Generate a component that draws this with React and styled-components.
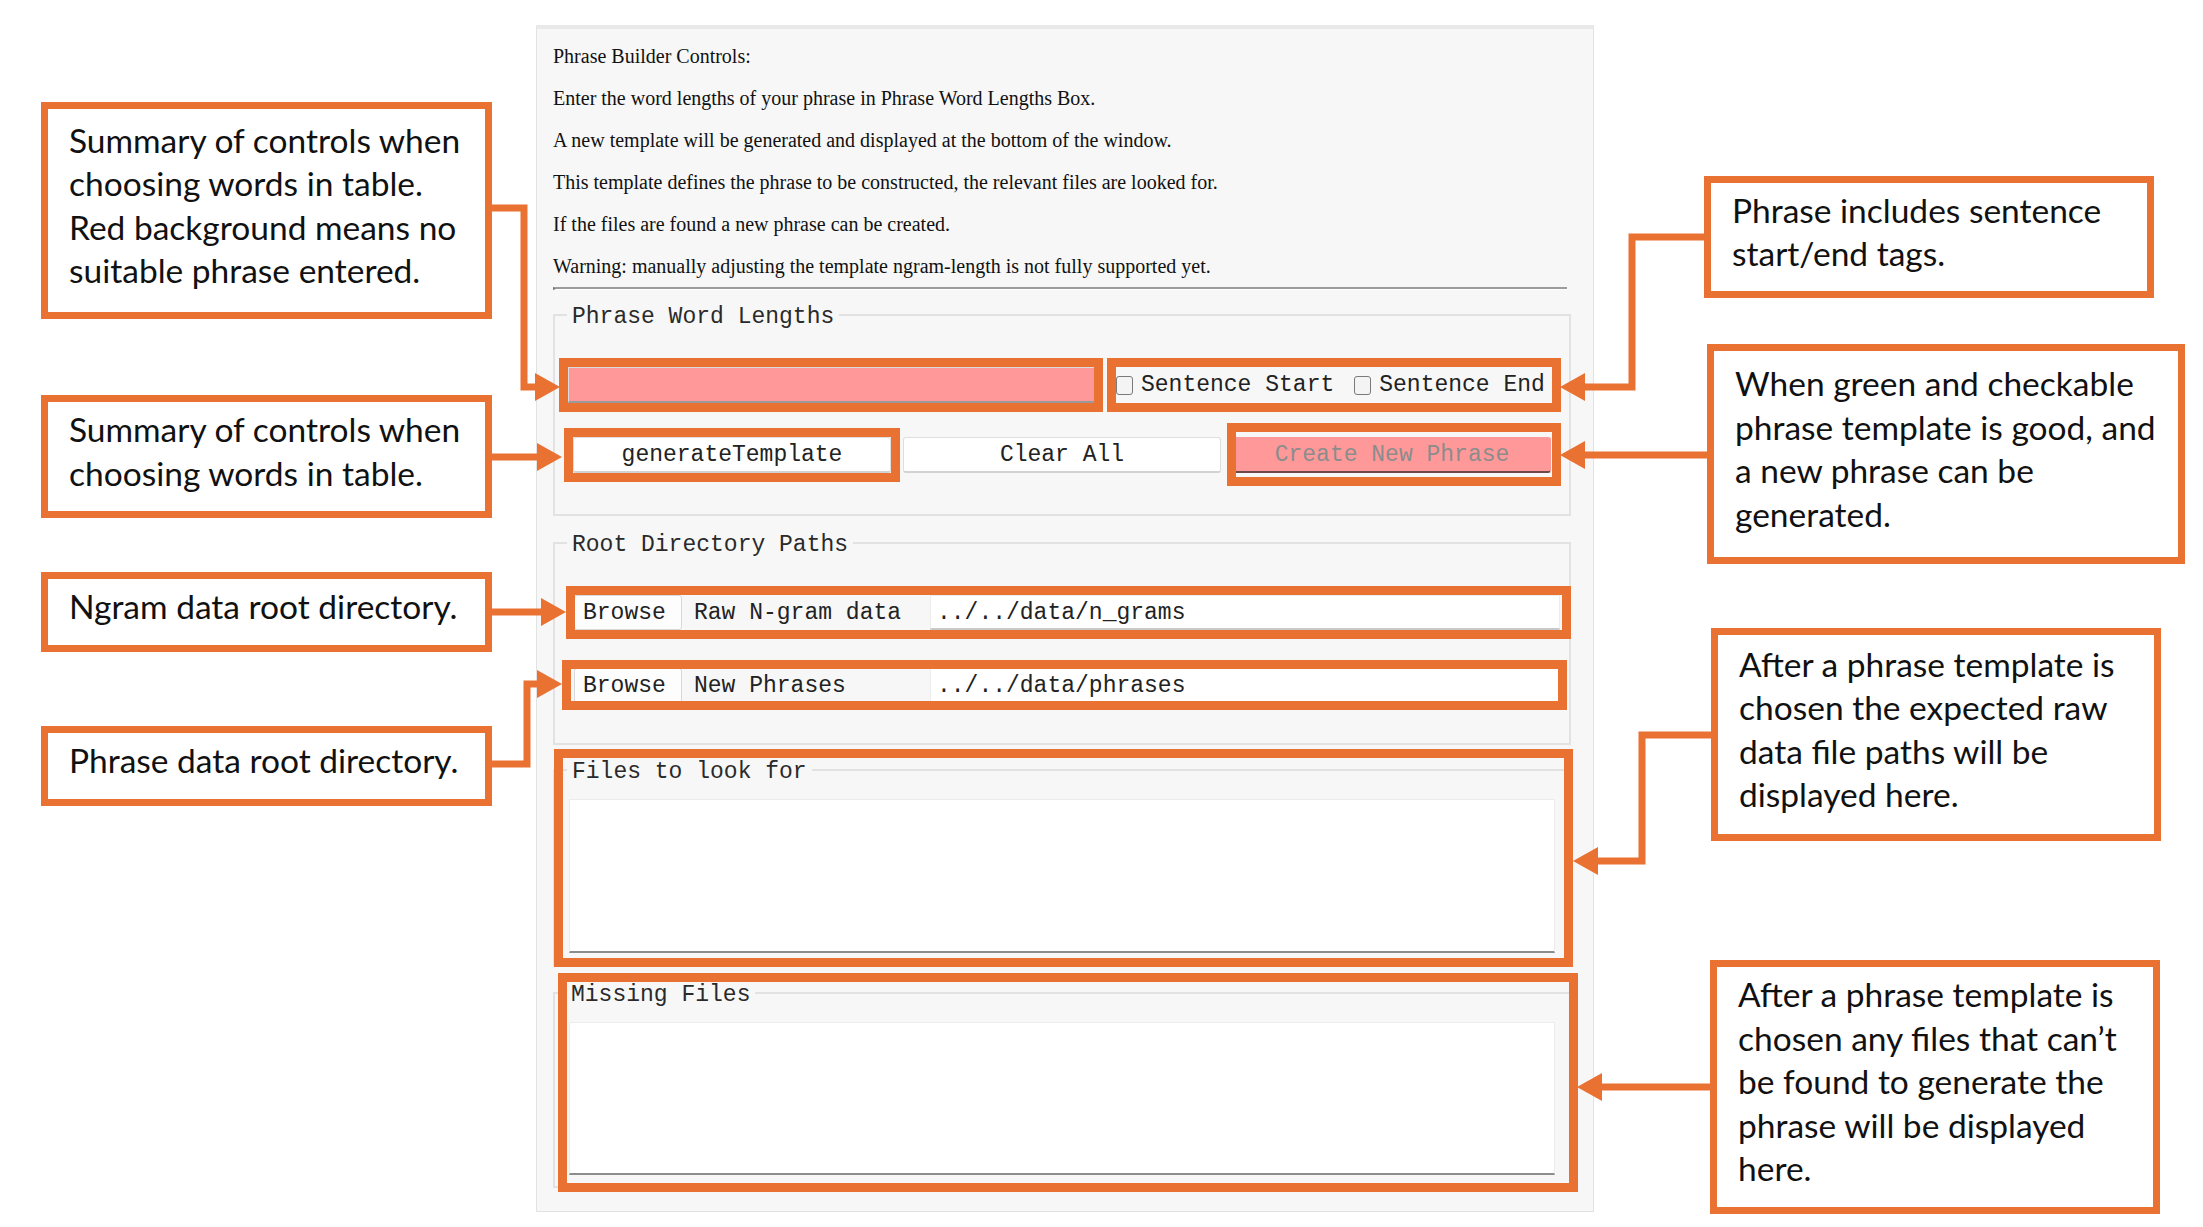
import React from 'react';
import styled, { createGlobalStyle } from 'styled-components';

const ORANGE = '#E97132';
const MONO = '"Liberation Mono", "Courier New", monospace';
const SERIF = '"Liberation Serif", "Times New Roman", serif';
const SANS = 'Lato, "Open Sans", sans-serif';

const GlobalStyle = createGlobalStyle`
  html, body { margin: 0; padding: 0; background: #fff; }
  * { box-sizing: border-box; }
`;

const Canvas = styled.div`
  position: relative;
  width: 2203px;
  height: 1227px;
  overflow: hidden;
  background: #fff;
  padding: 25px 0 0 536px;
`;

const Panel = styled.div`
  width: 1058px;
  background: #f7f7f7;
  border: 1px solid #e2e2e2;
  border-top: 4px solid #e9e9e9;
  padding: 6px 22px 23px 16px;
`;

const Intro = styled.p`
  margin: 0;
  font-family: ${SERIF};
  font-size: 20px;
  line-height: 42px;
  color: #111;
  white-space: nowrap;
`;

const Rule = styled.div`
  height: 3px;
  margin-right: 4px;
  border-top: 2px solid #9c9c9c;
  border-left: 3px solid #777;
  border-bottom: 1px solid #fff;
`;

const Group = styled.div`
  position: relative;
  margin-top: ${p => p.$gap}px;
  border: 2px solid #e2e2e2;
  padding: 0 ${p => p.$pr}px ${p => p.$pb}px ${p => p.$pl}px;
`;

const Legend = styled.div`
  width: fit-content;
  margin: -12px 0 0 ${p => p.$ml}px;
  padding: 0 5px;
  background: #f7f7f7;
  font-family: ${MONO};
  font-size: 23px;
  line-height: 26px;
  color: #2a2a2a;
  white-space: pre;
`;

/* orange highlight frame drawn over a control */
const Marked = styled.div`
  position: relative;
  flex: none;
  &::after {
    content: '';
    position: absolute;
    top: ${p => p.$t ?? -9}px;
    right: ${p => p.$r ?? -9}px;
    bottom: ${p => p.$b ?? -9}px;
    left: ${p => p.$l ?? -9}px;
    border: 9px solid ${ORANGE};
    pointer-events: none;
    z-index: 2;
  }
`;

const InputRow = styled.div`
  display: flex;
  align-items: center;
  gap: 21px;
  margin-top: 37px;
`;

const PhraseInput = styled.input`
  display: block;
  width: 527px;
  height: 36px;
  margin: 0;
  background: #ff9999;
  border: 1px solid #dcdcdc;
  border-bottom: 2px solid #9a9a9a;
  box-shadow: 0 0 0 1px #fff;
  outline: none;
`;

const Checks = styled.div`
  display: flex;
  align-items: center;
  width: 436px;
  height: 36px;
  font-family: ${MONO};
  font-size: 23px;
  color: #222;
  white-space: pre;
`;

const Check = styled.input.attrs({ type: 'checkbox' })`
  appearance: none;
  flex: none;
  width: 17px;
  height: 19px;
  margin: 0 8px 0 ${p => p.$gap || 0}px;
  border: 1px solid #7a7a7a;
  border-radius: 3px;
  background: #f4f4f4;
`;

const ButtonRow = styled.div`
  display: grid;
  grid-template-columns: repeat(3, 318px);
  gap: 12px;
  margin: 34px 0 0 5px;
`;

const Button = styled.button`
  display: block;
  width: 100%;
  height: 36px;
  margin: 0;
  padding: 0;
  font-family: ${MONO};
  font-size: 23px;
  color: ${p => (p.$danger ? '#8c8c8c' : '#222')};
  background: ${p => (p.$danger ? '#ff9999' : '#fff')};
  border: 1px solid ${p => (p.$danger ? '#ff9999' : '#dedede')};
  border-bottom: 2px solid ${p => (p.$danger ? '#6e4848' : '#d2d2d2')};
  border-radius: 3px;
`;

const PathRow = styled.div`
  display: flex;
  align-items: stretch;
  width: 986px;
  height: 35px;
  margin-top: ${p => p.$gap}px;
  font-family: ${MONO};
  font-size: 23px;
  color: #222;
`;

const Browse = styled.button`
  flex: none;
  width: 108px;
  height: 100%;
  margin: 0;
  padding: 0 0 0 8px;
  text-align: left;
  font: inherit;
  color: inherit;
  background: #fdfdfd;
  border: 1px solid #d9d9d9;
  border-radius: 3px;
`;

const PathLabel = styled.span`
  flex: none;
  width: 248px;
  padding-left: 12px;
  line-height: 37px;
  white-space: pre;
`;

const PathInput = styled.input`
  flex: 1;
  min-width: 0;
  margin: 0;
  padding: 2px 6px 0;
  font: inherit;
  color: inherit;
  background: #fff;
  border: 1px solid #ececec;
  border-bottom: 2px solid #c9c9c9;
  outline: none;
`;

const TextBox = styled.div`
  height: ${p => p.$h}px;
  margin-top: 14px;
  margin-right: 1px;
  background: #fff;
  border: 1px solid #ececec;
  border-bottom: 2px solid #8c8c8c;
`;

const Callout = styled.div`
  position: absolute;
  left: ${p => p.$x}px;
  top: ${p => p.$y}px;
  width: ${p => p.$w}px;
  height: ${p => p.$h}px;
  display: flex;
  flex-direction: column;
  justify-content: center;
  padding: 0 6px 10px 21px;
  background: #fff;
  border: 7px solid ${ORANGE};
  font-family: ${SANS};
  font-size: 33.5px;
  line-height: 43.5px;
  color: #111;
  white-space: nowrap;
  z-index: 3;
`;

const Connectors = styled.svg`
  position: absolute;
  left: 0;
  top: 0;
  pointer-events: none;
  z-index: 4;
`;

const intro = [
  'Phrase Builder Controls:',
  'Enter the word lengths of your phrase in Phrase Word Lengths Box.',
  'A new template will be generated and displayed at the bottom of the window.',
  'This template defines the phrase to be constructed, the relevant files are looked for.',
  'If the files are found a new phrase can be created.',
  'Warning: manually adjusting the template ngram-length is not fully supported yet.',
];

const callouts = [
  { x: 41, y: 102, w: 451, h: 217, lines: ['Summary of controls when', 'choosing words in table.', 'Red background means no', 'suitable phrase entered.'] },
  { x: 41, y: 395, w: 451, h: 123, lines: ['Summary of controls when', 'choosing words in table.'] },
  { x: 41, y: 572, w: 451, h: 80, lines: ['Ngram data root directory.'] },
  { x: 41, y: 726, w: 451, h: 80, lines: ['Phrase data root directory.'] },
  { x: 1704, y: 176, w: 450, h: 122, lines: ['Phrase includes sentence', 'start/end tags.'] },
  { x: 1707, y: 344, w: 478, h: 220, lines: ['When green and checkable', 'phrase template is good, and', 'a new phrase can be', 'generated.'] },
  { x: 1711, y: 628, w: 450, h: 213, lines: ['After a phrase template is', 'chosen the expected raw', 'data file paths will be', 'displayed here.'] },
  { x: 1710, y: 960, w: 450, h: 254, lines: ['After a phrase template is', 'chosen any files that can\u2019t', 'be found to generate the', 'phrase will be displayed', 'here.'] },
];

// [path, arrow tip x, tip y, direction]
const links = [
  ['M492 208 H524 V387 H538', 560, 387, 1],
  ['M492 457 H538', 562, 457, 1],
  ['M492 612 H543', 566, 612, 1],
  ['M492 764 H527 V684 H540', 562, 684, 1],
  ['M1704 237 H1632 V387 H1582', 1560, 387, -1],
  ['M1707 455 H1582', 1560, 455, -1],
  ['M1711 735 H1642 V861 H1595', 1573, 861, -1],
  ['M1710 1087 H1599', 1577, 1087, -1],
];

const Arrow = ({ x, y, dir }) => {
  const base = x - dir * 25;
  return <polygon points={`${base},${y - 14} ${x},${y} ${base},${y + 14}`} fill={ORANGE} />;
};

export default function App() {
  return (
    <>
      <GlobalStyle />
      <Canvas>
        <Panel>
          {intro.map(t => (
            <Intro key={t}>{t}</Intro>
          ))}
          <Rule />

          <Group $gap={24} $pl={13} $pr={13} $pb={41}>
            <Legend $ml={-1}>Phrase Word Lengths</Legend>
            <InputRow>
              <Marked $r={-8}>
                <PhraseInput />
              </Marked>
              <Marked>
                <Checks>
                  <Check />
                  Sentence Start
                  <Check $gap={20} />
                  Sentence End
                </Checks>
              </Marked>
            </InputRow>
            <ButtonRow>
              <Marked>
                <Button>generateTemplate</Button>
              </Marked>
              <Button>Clear All</Button>
              <Marked $t={-14} $b={-13} $l={-6} $r={-10}>
                <Button $danger>Create New Phrase</Button>
              </Marked>
            </ButtonRow>
          </Group>

          <Group $gap={26} $pl={19} $pr={9} $pb={40}>
            <Legend $ml={-7}>Root Directory Paths</Legend>
            <Marked $l={-8} $r={-11}>
              <PathRow $gap={37}>
                <Browse>Browse</Browse>
                <PathLabel>Raw N-gram data</PathLabel>
                <PathInput readOnly defaultValue="../../data/n_grams" />
              </PathRow>
            </Marked>
            <Marked $l={-12} $r={-7} $t={-8} $b={-7}>
              <PathRow $gap={38}>
                <Browse>Browse</Browse>
                <PathLabel>New Phrases</PathLabel>
                <PathInput readOnly defaultValue="../../data/phrases" />
              </PathRow>
            </Marked>
          </Group>

          <Marked $t={-20} $l={1} $r={-2} $b={-1}>
            <Group $gap={24} $pl={14} $pr={13} $pb={11}>
              <Legend $ml={-2}>Files to look for</Legend>
              <TextBox $h={154} />
            </Group>
          </Marked>

          <Marked $t={-19} $l={5} $r={-7} $b={-4}>
            <Group $gap={26} $pl={14} $pr={13} $pb={11}>
              <Legend $ml={-3}>Missing Files</Legend>
              <TextBox $h={153} />
            </Group>
          </Marked>
        </Panel>

        {callouts.map((c, i) => (
          <Callout key={i} $x={c.x} $y={c.y} $w={c.w} $h={c.h}>
            {c.lines.map(l => (
              <span key={l}>{l}</span>
            ))}
          </Callout>
        ))}

        <Connectors width="2203" height="1227" viewBox="0 0 2203 1227">
          {links.map(([d, x, y, dir]) => (
            <g key={d}>
              <path d={d} fill="none" stroke={ORANGE} strokeWidth="7" strokeLinejoin="miter" strokeLinecap="butt" />
              <Arrow x={x} y={y} dir={dir} />
            </g>
          ))}
        </Connectors>
      </Canvas>
    </>
  );
}
